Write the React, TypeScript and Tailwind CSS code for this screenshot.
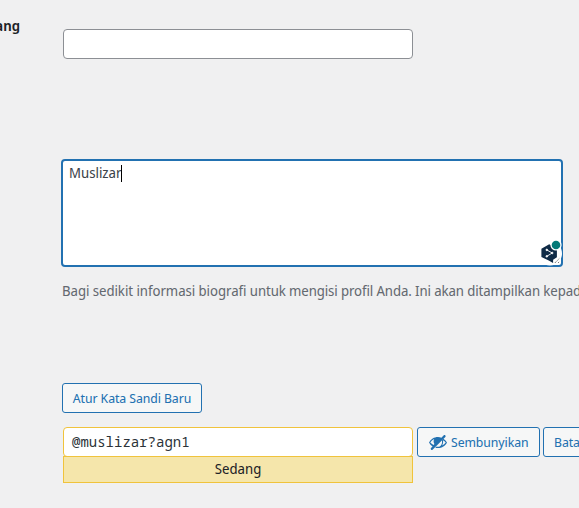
import React from "react";

function HiddenIcon() {
  return (
    <svg viewBox="0 0 20 20" className="h-5 w-5 shrink-0" fill="currentColor">
      <path d="M17.2 3.3l.16.17c.39.39.39 1.02 0 1.41L4.55 17.7c-.39.39-1.03.39-1.41 0l-.17-.17c-.39-.39-.39-1.02 0-1.41l1.59-1.6c-1.57-1-2.76-2.3-3.56-3.93.81-1.65 2.03-2.98 3.64-3.99S8.04 5.09 10 5.09c1.2 0 2.33.21 3.4.6l2.38-2.39c.39-.39 1.03-.39 1.42 0zM5.5 12.9l.9-.9c-1-1.5-1-3.4-.2-5C4.5 7.8 3.2 9 2.3 10.59c.8 1 1.9 1.8 3.2 2.31z" fillRule="evenodd" />
      <path d="M15.46 6.65c1.54 1 2.72 2.31 3.54 3.94-.81 1.64-2.03 2.98-3.64 3.99S11.96 16.09 10 16.09c-.9 0-1.9-.13-2.8-.4l1-.98c1 .2 2 .2 3 0 2.2-.9 3.4-3.4 2.7-6.51l1.56-1.55zm-.56 1.7c.5 1.9.2 3.7-.9 5.2 1.5-.7 2.8-1.7 3.7-2.96-.7-1-1.6-1.8-2.8-2.24z" fillRule="evenodd" />
    </svg>
  );
}

function AssistantBadge() {
  return (
    <div className="absolute right-[-2px] bottom-[-2px] h-[28px] w-[25px]">
      <svg viewBox="0 0 25 28" className="h-full w-full">
        <circle cx="12" cy="14.5" r="12" fill="#fff" />
        <path d="M11.2 5.3L18.9 9.7v8.6l-3.8 2.4v3.4l-4.4-2.5L3.4 18V9.7z" fill="#0f2b46" />
        <g stroke="#fff" strokeWidth=".9" fill="#fff">
          <path d="M8.8 10.9l5.4 3.1-5.4 3.3" fill="none" />
          <circle cx="8.8" cy="10.9" r=".8" />
          <circle cx="14.2" cy="14" r=".8" />
          <circle cx="8.8" cy="17.3" r=".8" />
        </g>
        <circle cx="18" cy="6" r="5.6" fill="#fff" />
        <circle cx="18" cy="6" r="4.3" fill="#047a78" />
        <path d="M16.8 24l4.5-4.5M20 24l1.5-1.5" stroke="#444" strokeWidth=".8" strokeDasharray="1.3 .7" />
      </svg>
    </div>
  );
}

const button =
  "flex h-[30px] shrink-0 items-center rounded-[3px] border border-[#2271b1] bg-[#f6f7f7] text-[13px] tracking-[-0.08px] whitespace-nowrap text-[#2271b1]";

export default function App() {
  return (
    <div className="flex h-[508px] w-[579px] overflow-hidden bg-[#f0f0f1] font-['Noto_Sans_Display','Noto_Sans',sans-serif] text-[#3c434a]">
      <div className="flex w-5 shrink-0 justify-end pt-[17px] text-[14px] leading-[18px] font-semibold text-[#1d2327]">ang</div>
      <main className="ml-[41px] w-[518px] shrink-0 pt-[29px]">
        <input aria-label="Nama" className="ml-[2px] block h-[30px] w-[350px] rounded-[4px] border border-[#8c8f94] bg-white px-2" />
        <div className="relative mt-[100px] h-[108px] w-[502px] rounded-[4px] border-2 border-[#2271b1] bg-white px-[6px] pt-[2px] text-[14px] leading-5">
          <div className="flex items-center">
            <span>Muslizar</span>
            <span className="h-[17px] w-px bg-black" />
          </div>
          <AssistantBadge />
        </div>
        <p className="mt-[13px] ml-px text-[14px] leading-[21px] whitespace-nowrap text-[#646970]">
          <span className="tracking-[-0.05px]">Bagi sedikit informasi biografi </span>
          <span className="tracking-[-0.1px]">untuk mengisi profil Anda. Ini akan ditampilkan kepada</span>
        </p>
        <button className={`${button} mt-[82px] ml-px w-[140px] justify-center pt-px`}>Atur Kata Sandi Baru</button>
        <div className="mt-[14px] ml-[2px] flex">
          <div className="w-[350px] shrink-0">
            <div className="flex h-[30px] items-center rounded-[4px] border border-[#f0c33c] bg-white px-2 font-['Noto_Sans_Mono','DejaVu_Sans_Mono',monospace] text-[14px] text-[#2c3338]"><span className="-mt-px">@muslizar?agn1</span></div>
            <div className="-mt-px flex h-[27px] items-center justify-center border border-[#f0c33c] bg-[#f5e6ab] pb-[2px] text-[14px] text-[#1d2327]">Sedang</div>
          </div>
          <button className={`${button} ml-1 w-[123px] gap-[3px] pl-[10px]`}>
            <HiddenIcon />
            <span className="pt-px">Sembunyikan</span>
          </button>
          <button className={`${button} ml-[3px] px-[10px] pt-px`}>Batal</button>
        </div>
      </main>
    </div>
  );
}
